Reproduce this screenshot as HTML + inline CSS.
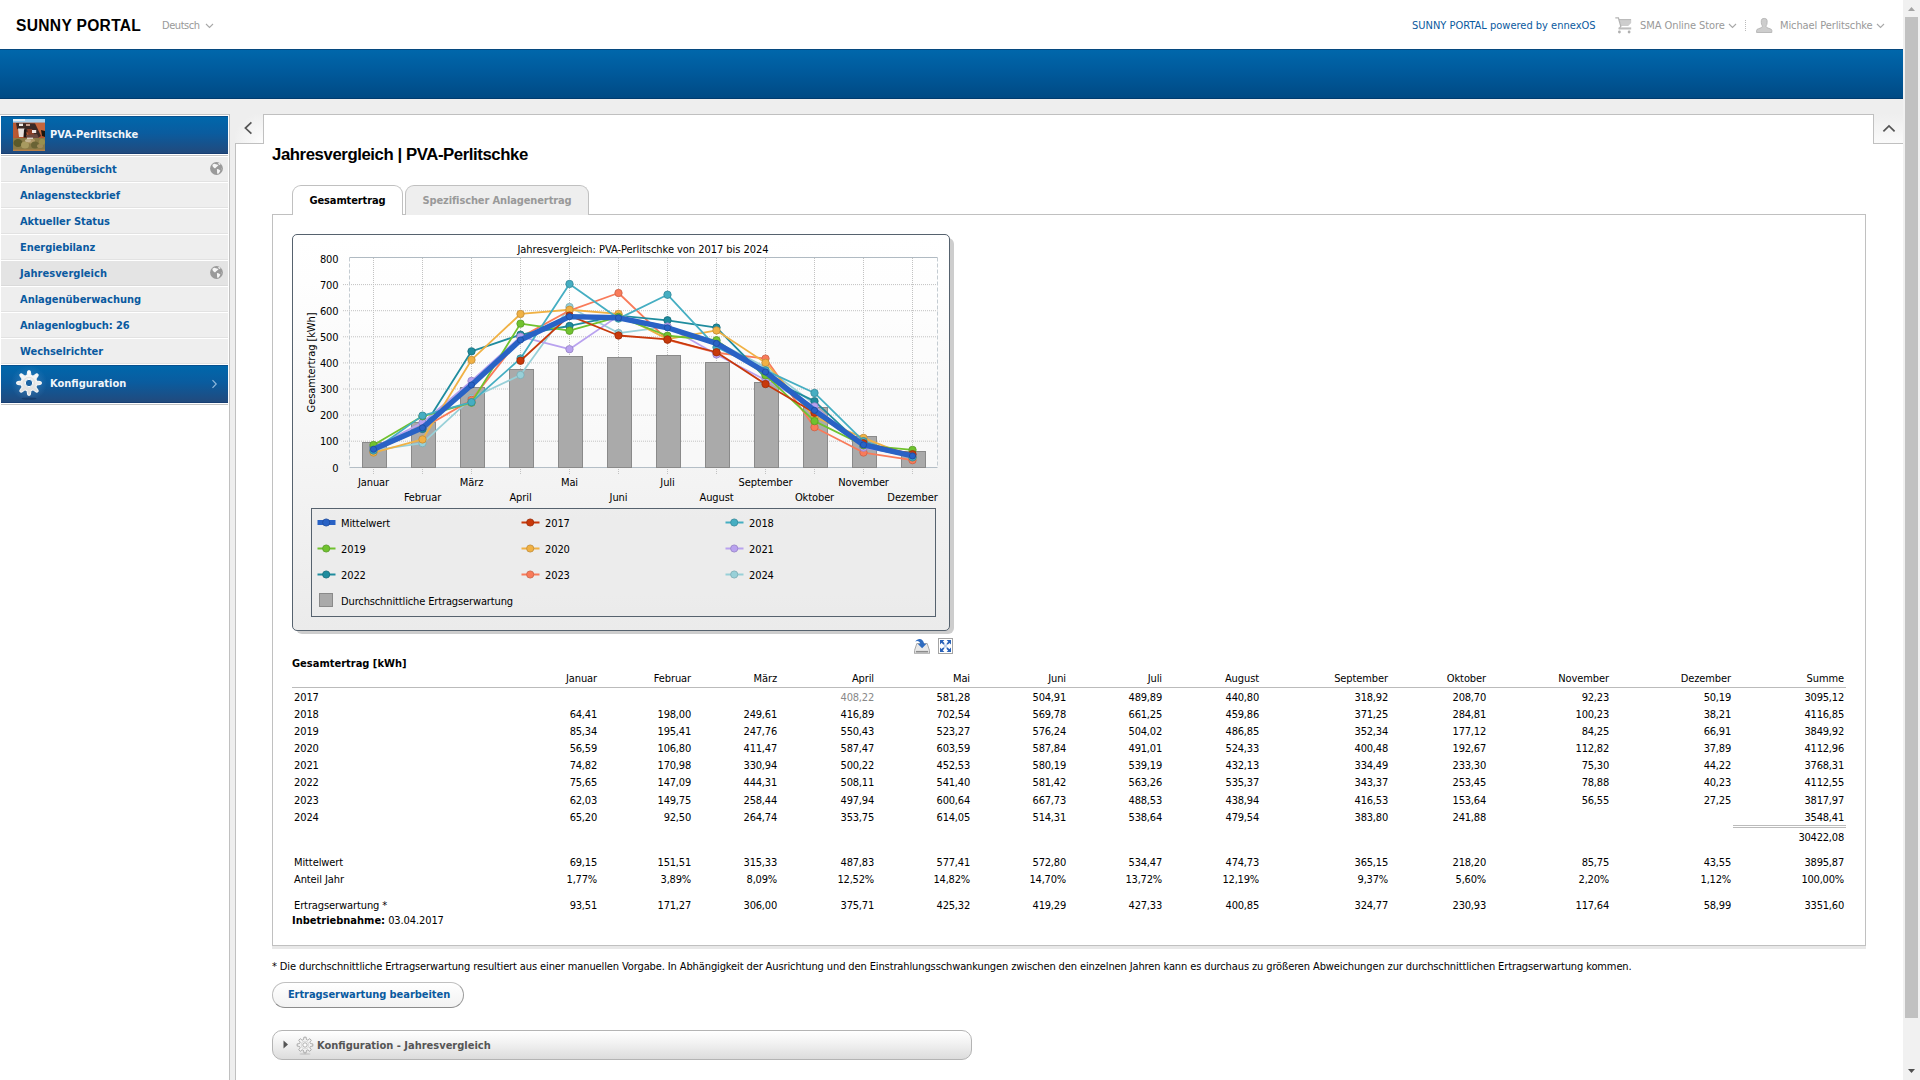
<!DOCTYPE html>
<html lang="de"><head><meta charset="utf-8"><title>Sunny Portal - Jahresvergleich</title>
<style>
*{box-sizing:border-box}
html,body{margin:0;padding:0}
body{width:1920px;height:1080px;overflow:hidden;position:relative;background:#fff;
 font-family:"DejaVu Sans Condensed","DejaVu Sans","Liberation Sans",sans-serif;font-stretch:condensed;font-size:11px;color:#000;letter-spacing:-0.1px}
.abs{position:absolute}
.nw{white-space:nowrap}
#top{left:0;top:0;width:1903px;height:49px;background:#fff}
#logo{left:16px;top:16px;font:bold 15.6px/20px "Liberation Sans",sans-serif;letter-spacing:0.3px;color:#000}
.hgrey{color:#999}
.hblue{color:#0a5aa0}
#lang{left:162px;top:19px;line-height:14px;letter-spacing:-0.45px}
#ennex{left:1412px;top:19px;line-height:14px;letter-spacing:0}
#store{left:1640px;top:19px;line-height:14px;letter-spacing:-0.07px}
#usr{left:1780px;top:19px;line-height:14px;letter-spacing:-0.1px}
#dots{left:1745px;top:20px;width:1px;height:12px;background:repeating-linear-gradient(#bbb 0 1px,transparent 1px 2px)}
#bar{left:0;top:49px;width:1903px;height:50px;background:linear-gradient(#0067ab,#005a9c 45%,#004a84);border-top:1px solid #06497f;border-bottom:1px solid #003b6e}
#pagebg{left:0;top:99px;width:1903px;height:981px;background:#eee}
#side{left:0;top:114px;width:230px;height:966px;background:#fff;border-top:1px solid #c4c4c4;border-right:1px solid #c0c0c0}
.bluehd{background:linear-gradient(#0067ab,#0a5c9f 45%,#214a7d)}
.wt{color:#f0f5fa;font-weight:bold;line-height:14px;letter-spacing:0}
.sline{left:1px;width:227px;height:1px;background:#c4c4c4}
#pvh{left:1px;top:116px;width:227px;height:38px;border-top:1px solid #07508e;border-bottom:1px solid #173e72}
.mi{left:1px;width:227px;height:25px;background:#eee;border-bottom:1px solid #e2e2e2;color:#0a5aa0;font-weight:bold;line-height:26px;padding-left:19px;letter-spacing:-0.15px}
.mi.sel{background:#e4e4e4;border-bottom-color:#dadada}
#cfg{left:1px;top:365px;width:227px;height:38px;border-top:1px solid #07508e;border-bottom:1px solid #173e72}
#content{left:235px;top:114px;width:1668px;height:966px;background:#fff;border-left:1px solid #c0c0c0;border-top:1px solid #c0c0c0}
#colbtn{left:235px;top:114px;width:29px;height:30px;background:radial-gradient(circle at 100% 100%,#fdfdfd,#eee 75%);border-right:1px solid #c0c0c0;border-bottom:1px solid #c0c0c0}
#upbtn{left:1873px;top:114px;width:30px;height:30px;background:linear-gradient(#eee,#fafafa);border-left:1px solid #c0c0c0;border-bottom:1px solid #c0c0c0}
#title{left:272px;top:145px;margin:0;font:bold 16.75px/20px "Liberation Sans",sans-serif;letter-spacing:-0.42px;color:#000}
.tab{top:185px;height:30px;border:1px solid #c0c0c0;border-bottom:none;border-radius:9px 9px 0 0;font-weight:bold;line-height:29px;text-align:center;letter-spacing:-0.12px}
#tab1{left:292px;width:111px;background:#fff;color:#000;height:30px}
#tab2{left:405px;width:184px;background:#eee;color:#999}
#panel{left:272px;top:214px;width:1594px;height:732px;border:1px solid #c0c0c0;background:#fff;box-shadow:0 3px 0 #e8e8e8}
#tcap{left:292px;top:657px;line-height:14px;font-weight:bold;letter-spacing:0}
#inb{left:292px;top:914px;line-height:14px}
#inb b{letter-spacing:0}
#tbl{border-collapse:separate;border-spacing:0;table-layout:fixed;letter-spacing:-0.2px}
#tbl td,#tbl th{padding:0 2px 1px 2px;text-align:right;font-weight:normal;vertical-align:bottom;line-height:13px;white-space:nowrap}
#tbl th{letter-spacing:-0.1px}
#tbl td.l{text-align:left;letter-spacing:-0.1px}
#tbl tr.hd th{border-bottom:1px solid #bbb;padding-bottom:2px}
#tbl td.g{color:#888}
#tbl tr.sum td:last-child{border-top:3px double #bbb}
#foot{left:272px;top:960px;line-height:14px;letter-spacing:-0.114px}
#btn{left:272px;top:982px;width:192px;height:26px;border:1px solid;border-color:#c0c0c0 #9c9c9c #8c8c8c #bcbcbc;border-radius:13px;background:linear-gradient(#fff,#f2f2f2);color:#0a5aa0;font-weight:bold;line-height:24px;text-align:center;letter-spacing:-0.05px;padding-left:2px}
#acc{left:272px;top:1030px;width:700px;height:30px;border:1px solid #b4b4b4;border-radius:10px;background:linear-gradient(#fff,#f1f1f1 45%,#dcdcdc)}
#acct{left:317px;top:1039px;line-height:14px;font-weight:bold;color:#555;letter-spacing:0}
#scroll{left:1903px;top:0;width:17px;height:1080px;background:#f1f1f1}
#thumb{left:1905px;top:17px;width:13px;height:1001px;background:#c1c1c1}
</style></head><body>
<div class="abs" id="top"></div>
<div class="abs nw" id="logo">SUNNY PORTAL</div>
<div class="abs nw hgrey" id="lang">Deutsch</div>
<svg class="abs" style="left:205px;top:23px" width="9" height="6" viewBox="0 0 9 6"><path d="M1 1L4.5 4.4L8 1" fill="none" stroke="#a8a8a8" stroke-width="1.1"/></svg>
<div class="abs nw hblue" id="ennex">SUNNY PORTAL powered by ennexOS</div>
<svg class="abs" style="left:1615px;top:17px" width="17" height="17" viewBox="0 0 17 17"><path d="M4 2.3H16.2V6L13.2 9H6z" fill="#cdcdcd"/><path d="M4 2.6H16" stroke="#b8b8b8" stroke-width="1" fill="none"/><path d="M0.3 0.9H3.4L5.8 9.3L4 12" stroke="#b4b4b4" stroke-width="1.3" fill="none"/><path d="M3.6 10.4H16.2V12.5H3.6z" fill="#bdbdbd"/><circle cx="4.4" cy="15" r="1.4" fill="#b0b0b0"/><circle cx="14.1" cy="15" r="1.4" fill="#b0b0b0"/></svg>
<div class="abs nw hgrey" id="store">SMA Online Store</div>
<svg class="abs" style="left:1728px;top:23px" width="9" height="6" viewBox="0 0 9 6"><path d="M1 1L4.5 4.4L8 1" fill="none" stroke="#a8a8a8" stroke-width="1.1"/></svg>
<div class="abs" id="dots"></div>
<svg class="abs" style="left:1756px;top:17px" width="17" height="17" viewBox="0 0 17 17"><path d="M0.6 15.5V13.4Q0.6 12.2 2.4 11.8L5.6 10.6Q6.6 10 6.3 8.8Q5.3 7.6 5.3 5.6V3.6Q5.3 1.4 8.2 1.4Q11.1 1.4 11.1 3.6V5.6Q11.1 7.6 10.1 8.8Q9.8 10 10.8 10.6L14 11.8Q15.8 12.2 15.8 13.4V15.5z" fill="#cdcdcd" stroke="#b4b4b4" stroke-width="0.9"/></svg>
<div class="abs nw hgrey" id="usr">Michael Perlitschke</div>
<svg class="abs" style="left:1876px;top:23px" width="9" height="6" viewBox="0 0 9 6"><path d="M1 1L4.5 4.4L8 1" fill="none" stroke="#a8a8a8" stroke-width="1.1"/></svg>
<div class="abs" id="bar"></div>
<div class="abs" id="pagebg"></div>
<div class="abs" id="side"></div>
<div class="abs bluehd" id="pvh"></div><div class="abs sline" style="top:155px"></div>
<svg class="abs" style="left:13px;top:119px" width="32" height="32" viewBox="0 0 32 32"><defs><filter id="tb" x="-5%" y="-5%" width="110%" height="110%"><feGaussianBlur stdDeviation="0.7"/></filter><clipPath id="tc"><rect width="32" height="32"/></clipPath></defs><g clip-path="url(#tc)"><g filter="url(#tb)"><rect x="-2" y="-2" width="36" height="36" fill="#b5552f"/><rect x="-2" y="-2" width="36" height="5.6" fill="#a9d2ee"/><rect x="-2" y="-2" width="14" height="4" fill="#e4eef6"/><path d="M22 4L34 4L34 20L28 16z" fill="#c4663c"/><path d="M3 4L22 4.5L28 17L25 19L12 12L4 10z" fill="#3a2a26"/><path d="M0 5L3 4L4 18L0 19z" fill="#b85a36"/><rect x="6" y="4.6" width="4" height="2.4" fill="#f0ece8"/><rect x="13" y="5" width="4" height="2" fill="#c8a090"/><path d="M5 9.6L11.5 9.6L10.5 18L6 18z" fill="#e6e0dc"/><path d="M11 10.5L13 10.5L14 18.5L10.6 18.5z" fill="#1c1412"/><path d="M14 10L19 10L22 17L16 18z" fill="#8a3e28"/><rect x="19" y="11" width="4.2" height="3" fill="#efe6e2"/><path d="M13 16L24 15L26 19L14 20z" fill="#6a4a40"/><path d="M28 11L32 12L32 18L29 17z" fill="#1e1410"/><rect x="-2" y="19" width="36" height="12" fill="#8a7a46"/><ellipse cx="5" cy="24" rx="4.5" ry="4" fill="#5c5a2a"/><ellipse cx="12" cy="26" rx="4" ry="3.5" fill="#a89a60"/><ellipse cx="18" cy="22" rx="4" ry="2.5" fill="#b09868"/><ellipse cx="22" cy="26" rx="4" ry="3.5" fill="#6a6434"/><ellipse cx="27" cy="27" rx="3" ry="2" fill="#a08a58"/><ellipse cx="15" cy="21.5" rx="3" ry="1.6" fill="#c4b490"/><ellipse cx="29" cy="23" rx="3" ry="3" fill="#9a9050"/><rect x="14" y="18.6" width="6" height="1.4" fill="#d8d0c4"/><rect x="-2" y="30.6" width="36" height="4" fill="#b88048"/></g></g></svg>
<div class="abs nw wt" style="left:50px;top:128px">PVA-Perlitschke</div>
<div class="abs nw mi" style="top:157px;letter-spacing:-0.1px">Anlagenübersicht</div>
<div class="abs nw mi" style="top:183px;letter-spacing:-0.11px">Anlagensteckbrief</div>
<div class="abs nw mi" style="top:209px;letter-spacing:-0.06px">Aktueller Status</div>
<div class="abs nw mi" style="top:235px;letter-spacing:-0.06px">Energiebilanz</div>
<div class="abs nw mi sel" style="top:261px;letter-spacing:0.04px">Jahresvergleich</div>
<div class="abs nw mi" style="top:287px;letter-spacing:-0.01px">Anlagenüberwachung</div>
<div class="abs nw mi" style="top:313px;letter-spacing:-0.08px">Anlagenlogbuch: 26</div>
<div class="abs nw mi" style="top:339px;letter-spacing:-0.04px">Wechselrichter</div>
<svg class="abs" style="left:210px;top:162px" width="13" height="13" viewBox="0 0 13 13"><circle cx="6.5" cy="6.5" r="6.4" fill="#9a9a9a"/><path d="M2.4 2.8L4.2 1.7L6 2.2L8.6 3.1L7.4 4.2L6 5.4L5 6.4L3.6 5.6L2.6 4.2z" fill="#f6f6f6"/><path d="M8.2 1.0L9.4 1.0L10.5 2.4L9.6 3L8.6 2.2z" fill="#f6f6f6"/><path d="M6.9 7.1L8.4 7.3L10.4 8.6L9.4 10.4L8 12L7.2 11.4L7 9z" fill="#f6f6f6"/><path d="M11.4 6.1L12.1 6.4L12 7.6L11.4 7.4z" fill="#c4c4c4"/></svg>
<svg class="abs" style="left:210px;top:266px" width="13" height="13" viewBox="0 0 13 13"><circle cx="6.5" cy="6.5" r="6.4" fill="#9a9a9a"/><path d="M2.4 2.8L4.2 1.7L6 2.2L8.6 3.1L7.4 4.2L6 5.4L5 6.4L3.6 5.6L2.6 4.2z" fill="#f6f6f6"/><path d="M8.2 1.0L9.4 1.0L10.5 2.4L9.6 3L8.6 2.2z" fill="#f6f6f6"/><path d="M6.9 7.1L8.4 7.3L10.4 8.6L9.4 10.4L8 12L7.2 11.4L7 9z" fill="#f6f6f6"/><path d="M11.4 6.1L12.1 6.4L12 7.6L11.4 7.4z" fill="#c4c4c4"/></svg>
<div class="abs bluehd" id="cfg"></div><div class="abs sline" style="top:404px"></div>
<svg class="abs" style="left:9px;top:364px" width="40" height="38" viewBox="-20 -19 40 38"><defs><radialGradient id="gg" cx="0" cy="0" r="18" gradientUnits="userSpaceOnUse"><stop offset="0" stop-color="#5f9ad0" stop-opacity=".55"/><stop offset="1" stop-color="#5f9ad0" stop-opacity="0"/></radialGradient><linearGradient id="gf" x1="0" y1="0" x2="0" y2="1"><stop offset="0" stop-color="#fff"/><stop offset="1" stop-color="#d8d8d8"/></linearGradient></defs><circle r="18" fill="url(#gg)"/><ellipse cx="0" cy="15.6" rx="7.5" ry="1.1" fill="#0d2f5c" opacity=".55"/><path d="M-1.94 -7.76L-1.38 -11.22L-0.75 -12.28L0.75 -12.28L1.38 -11.22L1.94 -7.76L4.12 -6.86L6.96 -8.90L8.15 -9.21L9.21 -8.15L8.90 -6.96L6.86 -4.12L7.76 -1.94L11.22 -1.38L12.28 -0.75L12.28 0.75L11.22 1.38L7.76 1.94L6.86 4.12L8.90 6.96L9.21 8.15L8.15 9.21L6.96 8.90L4.12 6.86L1.94 7.76L1.38 11.22L0.75 12.28L-0.75 12.28L-1.38 11.22L-1.94 7.76L-4.12 6.86L-6.96 8.90L-8.15 9.21L-9.21 8.15L-8.90 6.96L-6.86 4.12L-7.76 1.94L-11.22 1.38L-12.28 0.75L-12.28 -0.75L-11.22 -1.38L-7.76 -1.94L-6.86 -4.12L-8.90 -6.96L-9.21 -8.15L-8.15 -9.21L-6.96 -8.90L-4.12 -6.86Z" fill="url(#gf)" stroke="#f6f6f6" stroke-width="1.1" stroke-linejoin="round"/><circle r="5.6" fill="none" stroke="#e2e2e2" stroke-width="1.2"/><circle r="3.7" fill="#1b62a2" stroke="#fff" stroke-width="1"/></svg>
<div class="abs nw wt" style="left:50px;top:377px">Konfiguration</div>
<svg class="abs" style="left:211px;top:379px" width="7" height="10" viewBox="0 0 7 10"><path d="M1.5 1.2L5.2 5L1.5 8.8" fill="none" stroke="#8fb8dc" stroke-width="1.2"/></svg>
<div class="abs" id="content"></div>
<div class="abs" id="colbtn"></div>
<svg class="abs" style="left:243px;top:121px" width="11" height="14" viewBox="0 0 11 14"><path d="M8.4 1.4L2.4 7.1L8.4 12.6" fill="none" stroke="#555" stroke-width="1.7"/></svg>
<div class="abs" id="upbtn"></div>
<svg class="abs" style="left:1882px;top:124px" width="14" height="9" viewBox="0 0 14 9"><path d="M1.4 7.4L7 2L12.6 7.4" fill="none" stroke="#555" stroke-width="1.7"/></svg>
<h1 class="abs nw" id="title">Jahresvergleich | PVA-Perlitschke</h1>
<div class="abs" id="panel"></div>
<div class="abs nw tab" id="tab2">Spezifischer Anlagenertrag</div>
<div class="abs nw tab" id="tab1">Gesamtertrag</div>
<svg class="abs" id="chart" style="left:288px;top:230px" width="670" height="410" viewBox="0 0 670 410" font-family='"DejaVu Sans Condensed","DejaVu Sans","Liberation Sans",sans-serif' font-size="11" letter-spacing="-0.1">
<defs><linearGradient id="pg" x1="0" y1="0" x2="0" y2="1"><stop offset="0" stop-color="#fff"/><stop offset="0.12" stop-color="#fefefe"/><stop offset="1" stop-color="#ebebeb"/></linearGradient></defs>
<rect x="8" y="8" width="658" height="396" rx="6" fill="#cdcdcd"/>
<rect x="4.5" y="4.5" width="657" height="396" rx="4.5" fill="url(#pg)" stroke="#56626e"/>
<rect x="61.5" y="27.5" width="588.0" height="210.0" fill="#fff" fill-opacity="0.35"/>
<path d="M55 211.2H649.5M55 185.1H649.5M55 159H649.5M55 132.9H649.5M55 106.8H649.5M55 80.7H649.5M55 54.6H649.5" stroke="#c2c2c2" stroke-dasharray="1 1" fill="none"/>
<path d="M85.5 28.0V237.0M85.5 239.0V245.0M134.5 28.0V237.0M134.5 239.0V245.0M183.5 28.0V237.0M183.5 239.0V245.0M232.5 28.0V237.0M232.5 239.0V245.0M281.5 28.0V237.0M281.5 239.0V245.0M330.5 28.0V237.0M330.5 239.0V245.0M379.5 28.0V237.0M379.5 239.0V245.0M428.5 28.0V237.0M428.5 239.0V245.0M477.5 28.0V237.0M477.5 239.0V245.0M526.5 28.0V237.0M526.5 239.0V245.0M575.5 28.0V237.0M575.5 239.0V245.0M624.5 28.0V237.0M624.5 239.0V245.0" stroke="#c2c2c2" stroke-dasharray="1 1" fill="none"/>
<path d="M61.5 27.5H649.5" stroke="#b0bac2" fill="none"/>
<path d="M61.5 237.5H649.5" stroke="#b4bec6" fill="none"/>
<path d="M61.5 27.5V237.5M649.5 27.5V237.5" stroke="#c4ccd2" stroke-dasharray="4 2" fill="none"/>
<rect x="74.5" y="212.5" width="24" height="25" fill="#aaa" stroke="#8a8a8a"/>
<rect x="123.5" y="192.5" width="24" height="45" fill="#aaa" stroke="#8a8a8a"/>
<rect x="172.5" y="157.5" width="24" height="80" fill="#aaa" stroke="#8a8a8a"/>
<rect x="221.5" y="139.5" width="24" height="98" fill="#aaa" stroke="#8a8a8a"/>
<rect x="270.5" y="126.5" width="24" height="111" fill="#aaa" stroke="#8a8a8a"/>
<rect x="319.5" y="127.5" width="24" height="110" fill="#aaa" stroke="#8a8a8a"/>
<rect x="368.5" y="125.5" width="24" height="112" fill="#aaa" stroke="#8a8a8a"/>
<rect x="417.5" y="132.5" width="24" height="105" fill="#aaa" stroke="#8a8a8a"/>
<rect x="466.5" y="152.5" width="24" height="85" fill="#aaa" stroke="#8a8a8a"/>
<rect x="515.5" y="177.5" width="24" height="60" fill="#aaa" stroke="#8a8a8a"/>
<rect x="564.5" y="206.5" width="24" height="31" fill="#aaa" stroke="#8a8a8a"/>
<rect x="613.5" y="221.5" width="24" height="16" fill="#aaa" stroke="#8a8a8a"/>
<g fill="#98d0d8" stroke="#7aabb2" stroke-width="0.8"><path d="M85.5 220.28L134.5 213.16L183.5 168.2L232.5 144.97L281.5 77.03L330.5 103.07L379.5 96.71L428.5 112.14L477.5 137.13L526.5 174.17" fill="none" stroke="#98d0d8" stroke-width="1.8" stroke-linejoin="round"/>
<circle cx="85.5" cy="220.28" r="3.7"/><circle cx="134.5" cy="213.16" r="3.7"/><circle cx="183.5" cy="168.2" r="3.7"/><circle cx="232.5" cy="144.97" r="3.7"/><circle cx="281.5" cy="77.03" r="3.7"/><circle cx="330.5" cy="103.07" r="3.7"/><circle cx="379.5" cy="96.71" r="3.7"/><circle cx="428.5" cy="112.14" r="3.7"/><circle cx="477.5" cy="137.13" r="3.7"/><circle cx="526.5" cy="174.17" r="3.7"/></g>
<g fill="#f97b5a" stroke="#c96248" stroke-width="0.8"><path d="M85.5 221.11L134.5 198.22L183.5 169.85L232.5 107.34L281.5 80.53L330.5 63.02L379.5 109.79L428.5 122.74L477.5 128.59L526.5 197.2L575.5 222.54L624.5 230.19" fill="none" stroke="#f97b5a" stroke-width="1.8" stroke-linejoin="round"/>
<circle cx="85.5" cy="221.11" r="3.7"/><circle cx="134.5" cy="198.22" r="3.7"/><circle cx="183.5" cy="169.85" r="3.7"/><circle cx="232.5" cy="107.34" r="3.7"/><circle cx="281.5" cy="80.53" r="3.7"/><circle cx="330.5" cy="63.02" r="3.7"/><circle cx="379.5" cy="109.79" r="3.7"/><circle cx="428.5" cy="122.74" r="3.7"/><circle cx="477.5" cy="128.59" r="3.7"/><circle cx="526.5" cy="197.2" r="3.7"/><circle cx="575.5" cy="222.54" r="3.7"/><circle cx="624.5" cy="230.19" r="3.7"/></g>
<g fill="#1f8c9e" stroke="#176c7a" stroke-width="0.8"><path d="M85.5 217.56L134.5 198.91L183.5 121.34L232.5 104.68L281.5 95.99L330.5 85.55L379.5 90.29L428.5 97.57L477.5 147.68L526.5 171.15L575.5 216.71L624.5 226.8" fill="none" stroke="#1f8c9e" stroke-width="1.8" stroke-linejoin="round"/>
<circle cx="85.5" cy="217.56" r="3.7"/><circle cx="134.5" cy="198.91" r="3.7"/><circle cx="183.5" cy="121.34" r="3.7"/><circle cx="232.5" cy="104.68" r="3.7"/><circle cx="281.5" cy="95.99" r="3.7"/><circle cx="330.5" cy="85.55" r="3.7"/><circle cx="379.5" cy="90.29" r="3.7"/><circle cx="428.5" cy="97.57" r="3.7"/><circle cx="477.5" cy="147.68" r="3.7"/><circle cx="526.5" cy="171.15" r="3.7"/><circle cx="575.5" cy="216.71" r="3.7"/><circle cx="624.5" cy="226.8" r="3.7"/></g>
<g fill="#b9a2ef" stroke="#9683c4" stroke-width="0.8"><path d="M85.5 217.77L134.5 192.67L183.5 150.92L232.5 106.74L281.5 119.19L330.5 85.87L379.5 96.57L428.5 124.51L477.5 150L526.5 176.41L575.5 217.65L624.5 225.76" fill="none" stroke="#b9a2ef" stroke-width="1.8" stroke-linejoin="round"/>
<circle cx="85.5" cy="217.77" r="3.7"/><circle cx="134.5" cy="192.67" r="3.7"/><circle cx="183.5" cy="150.92" r="3.7"/><circle cx="232.5" cy="106.74" r="3.7"/><circle cx="281.5" cy="119.19" r="3.7"/><circle cx="330.5" cy="85.87" r="3.7"/><circle cx="379.5" cy="96.57" r="3.7"/><circle cx="428.5" cy="124.51" r="3.7"/><circle cx="477.5" cy="150" r="3.7"/><circle cx="526.5" cy="176.41" r="3.7"/><circle cx="575.5" cy="217.65" r="3.7"/><circle cx="624.5" cy="225.76" r="3.7"/></g>
<g fill="#f0b144" stroke="#c08c38" stroke-width="0.8"><path d="M85.5 222.53L134.5 209.43L183.5 129.91L232.5 83.97L281.5 79.76L330.5 83.87L379.5 109.15L428.5 100.45L477.5 132.77L526.5 187.01L575.5 207.85L624.5 227.41" fill="none" stroke="#f0b144" stroke-width="1.8" stroke-linejoin="round"/>
<circle cx="85.5" cy="222.53" r="3.7"/><circle cx="134.5" cy="209.43" r="3.7"/><circle cx="183.5" cy="129.91" r="3.7"/><circle cx="232.5" cy="83.97" r="3.7"/><circle cx="281.5" cy="79.76" r="3.7"/><circle cx="330.5" cy="83.87" r="3.7"/><circle cx="379.5" cy="109.15" r="3.7"/><circle cx="428.5" cy="100.45" r="3.7"/><circle cx="477.5" cy="132.77" r="3.7"/><circle cx="526.5" cy="187.01" r="3.7"/><circle cx="575.5" cy="207.85" r="3.7"/><circle cx="624.5" cy="227.41" r="3.7"/></g>
<g fill="#70c22e" stroke="#58992a" stroke-width="0.8"><path d="M85.5 215.03L134.5 186.3L183.5 172.63L232.5 93.64L281.5 100.73L330.5 86.9L379.5 105.75L428.5 110.23L477.5 145.34L526.5 191.07L575.5 215.31L624.5 219.84" fill="none" stroke="#70c22e" stroke-width="1.8" stroke-linejoin="round"/>
<circle cx="85.5" cy="215.03" r="3.7"/><circle cx="134.5" cy="186.3" r="3.7"/><circle cx="183.5" cy="172.63" r="3.7"/><circle cx="232.5" cy="93.64" r="3.7"/><circle cx="281.5" cy="100.73" r="3.7"/><circle cx="330.5" cy="86.9" r="3.7"/><circle cx="379.5" cy="105.75" r="3.7"/><circle cx="428.5" cy="110.23" r="3.7"/><circle cx="477.5" cy="145.34" r="3.7"/><circle cx="526.5" cy="191.07" r="3.7"/><circle cx="575.5" cy="215.31" r="3.7"/><circle cx="624.5" cy="219.84" r="3.7"/></g>
<g fill="#45aec2" stroke="#35899a" stroke-width="0.8"><path d="M85.5 220.49L134.5 185.62L183.5 172.15L232.5 128.49L281.5 53.94L330.5 88.59L379.5 64.71L428.5 117.28L477.5 140.4L526.5 162.96L575.5 211.14L624.5 227.33" fill="none" stroke="#45aec2" stroke-width="1.8" stroke-linejoin="round"/>
<circle cx="85.5" cy="220.49" r="3.7"/><circle cx="134.5" cy="185.62" r="3.7"/><circle cx="183.5" cy="172.15" r="3.7"/><circle cx="232.5" cy="128.49" r="3.7"/><circle cx="281.5" cy="53.94" r="3.7"/><circle cx="330.5" cy="88.59" r="3.7"/><circle cx="379.5" cy="64.71" r="3.7"/><circle cx="428.5" cy="117.28" r="3.7"/><circle cx="477.5" cy="140.4" r="3.7"/><circle cx="526.5" cy="162.96" r="3.7"/><circle cx="575.5" cy="211.14" r="3.7"/><circle cx="624.5" cy="227.33" r="3.7"/></g>
<g fill="#c8390b" stroke="#9a2c08" stroke-width="0.8"><path d="M232.5 130.75L281.5 85.59L330.5 105.52L379.5 109.44L428.5 122.25L477.5 154.06L526.5 182.83L575.5 213.23L624.5 224.2" fill="none" stroke="#c8390b" stroke-width="1.8" stroke-linejoin="round"/>
<circle cx="232.5" cy="130.75" r="3.7"/><circle cx="281.5" cy="85.59" r="3.7"/><circle cx="330.5" cy="105.52" r="3.7"/><circle cx="379.5" cy="109.44" r="3.7"/><circle cx="428.5" cy="122.25" r="3.7"/><circle cx="477.5" cy="154.06" r="3.7"/><circle cx="526.5" cy="182.83" r="3.7"/><circle cx="575.5" cy="213.23" r="3.7"/><circle cx="624.5" cy="224.2" r="3.7"/></g>
<g fill="#2962c5" stroke="#1d4a9a" stroke-width="0.8"><path d="M85.5 219.25L134.5 197.76L183.5 155L232.5 109.98L281.5 86.6L330.5 87.8L379.5 97.8L428.5 113.4L477.5 142L526.5 180.35L575.5 214.92L624.5 225.93" fill="none" stroke="#2962c5" stroke-width="5.4" stroke-linejoin="round"/>
<circle cx="85.5" cy="219.25" r="3.1"/><circle cx="134.5" cy="197.76" r="3.1"/><circle cx="183.5" cy="155" r="3.1"/><circle cx="232.5" cy="109.98" r="3.1"/><circle cx="281.5" cy="86.6" r="3.1"/><circle cx="330.5" cy="87.8" r="3.1"/><circle cx="379.5" cy="97.8" r="3.1"/><circle cx="428.5" cy="113.4" r="3.1"/><circle cx="477.5" cy="142" r="3.1"/><circle cx="526.5" cy="180.35" r="3.1"/><circle cx="575.5" cy="214.92" r="3.1"/><circle cx="624.5" cy="225.93" r="3.1"/></g>
<text x="355" y="23" text-anchor="middle" letter-spacing="-0.04">Jahresvergleich: PVA-Perlitschke von 2017 bis 2024</text>
<text x="50.5" y="241.5" text-anchor="end">0</text>
<text x="50.5" y="215.4" text-anchor="end">100</text>
<text x="50.5" y="189.3" text-anchor="end">200</text>
<text x="50.5" y="163.2" text-anchor="end">300</text>
<text x="50.5" y="137.1" text-anchor="end">400</text>
<text x="50.5" y="111" text-anchor="end">500</text>
<text x="50.5" y="84.9" text-anchor="end">600</text>
<text x="50.5" y="58.8" text-anchor="end">700</text>
<text x="50.5" y="32.7" text-anchor="end">800</text>
<text x="85.5" y="256" text-anchor="middle">Januar</text>
<text x="134.5" y="271" text-anchor="middle">Februar</text>
<text x="183.5" y="256" text-anchor="middle">März</text>
<text x="232.5" y="271" text-anchor="middle">April</text>
<text x="281.5" y="256" text-anchor="middle">Mai</text>
<text x="330.5" y="271" text-anchor="middle">Juni</text>
<text x="379.5" y="256" text-anchor="middle">Juli</text>
<text x="428.5" y="271" text-anchor="middle">August</text>
<text x="477.5" y="256" text-anchor="middle">September</text>
<text x="526.5" y="271" text-anchor="middle">Oktober</text>
<text x="575.5" y="256" text-anchor="middle">November</text>
<text x="624.5" y="271" text-anchor="middle">Dezember</text>
<text transform="translate(27 132.5) rotate(-90)" text-anchor="middle">Gesamtertrag [kWh]</text>
<rect x="23.5" y="278.5" width="624" height="108" fill="#ebebeb" fill-opacity="0.8" stroke="#56626e"/>
<path d="M29.5 292.5h18" stroke="#2962c5" stroke-width="5"/><circle cx="38.2" cy="292.5" r="3.6" fill="#2962c5" stroke="#1d4a9a" stroke-width="0.8"/>
<text x="53" y="296.8">Mittelwert</text>
<path d="M233.5 292.5h18" stroke="#c8390b" stroke-width="2"/><circle cx="242.2" cy="292.5" r="3.6" fill="#c8390b" stroke="#9a2c08" stroke-width="0.8"/>
<text x="257" y="296.8">2017</text>
<path d="M437.5 292.5h18" stroke="#45aec2" stroke-width="2"/><circle cx="446.2" cy="292.5" r="3.6" fill="#45aec2" stroke="#35899a" stroke-width="0.8"/>
<text x="461" y="296.8">2018</text>
<path d="M29.5 318.5h18" stroke="#70c22e" stroke-width="2"/><circle cx="38.2" cy="318.5" r="3.6" fill="#70c22e" stroke="#58992a" stroke-width="0.8"/>
<text x="53" y="322.8">2019</text>
<path d="M233.5 318.5h18" stroke="#f0b144" stroke-width="2"/><circle cx="242.2" cy="318.5" r="3.6" fill="#f0b144" stroke="#c08c38" stroke-width="0.8"/>
<text x="257" y="322.8">2020</text>
<path d="M437.5 318.5h18" stroke="#b9a2ef" stroke-width="2"/><circle cx="446.2" cy="318.5" r="3.6" fill="#b9a2ef" stroke="#9683c4" stroke-width="0.8"/>
<text x="461" y="322.8">2021</text>
<path d="M29.5 344.5h18" stroke="#1f8c9e" stroke-width="2"/><circle cx="38.2" cy="344.5" r="3.6" fill="#1f8c9e" stroke="#176c7a" stroke-width="0.8"/>
<text x="53" y="348.8">2022</text>
<path d="M233.5 344.5h18" stroke="#f97b5a" stroke-width="2"/><circle cx="242.2" cy="344.5" r="3.6" fill="#f97b5a" stroke="#c96248" stroke-width="0.8"/>
<text x="257" y="348.8">2023</text>
<path d="M437.5 344.5h18" stroke="#98d0d8" stroke-width="2"/><circle cx="446.2" cy="344.5" r="3.6" fill="#98d0d8" stroke="#7aabb2" stroke-width="0.8"/>
<text x="461" y="348.8">2024</text>
<rect x="31.5" y="363.5" width="13" height="13" fill="#aaa" stroke="#8a8a8a"/>
<text x="53" y="375" letter-spacing="-0.13">Durchschnittliche Ertragserwartung</text>
</svg>
<svg class="abs" style="left:914px;top:638px" width="16" height="17" viewBox="0 0 16 17"><path d="M2.8 5.5h10.4l2.3 7v3h-15v-3z" fill="#e8e8e8" stroke="#a8a8a8"/><path d="M1 12.6h14v2.8h-14z" fill="#dcdcdc"/><path d="M2 13.7h12" stroke="#8c8c8c" stroke-width="1.5"/><path d="M1.2 3.6c2.6-4 8-3.6 9 2.2h2.3l-4.4 4.4-4.4-4.4h2.6c-.6-2.4-2.8-3.4-5.1-2.2z" fill="#2f6cc0"/></svg>
<svg class="abs" style="left:938px;top:638px" width="16" height="16" viewBox="0 0 16 16"><rect x=".5" y=".5" width="14" height="15" fill="#fff" stroke="#a4a4a4"/><path d="M3 3L12 13M12 3L3 13" stroke="#b8cce8" stroke-width="1.4"/><path d="M2 2h4.4l-1.5 1.5 1.7 1.7-1.2 1.2-1.7-1.7-1.7 1.7zM13 2v4.4l-1.5-1.5-1.7 1.7-1.2-1.2 1.7-1.7-1.7-1.7zM2 14v-4.4l1.5 1.5 1.7-1.7 1.2 1.2-1.7 1.7 1.7 1.7zM13 14h-4.4l1.5-1.5-1.7-1.7 1.2-1.2 1.7 1.7 1.7-1.7z" fill="#2a62b8"/></svg>
<div class="abs nw" id="tcap">Gesamtertrag [kWh]</div>
<table class="abs" id="tbl" style="left:292px;top:669px;width:1554px"><colgroup><col style="width:213px"><col style="width:94px"><col style="width:94px"><col style="width:86px"><col style="width:97px"><col style="width:96px"><col style="width:96px"><col style="width:96px"><col style="width:97px"><col style="width:129px"><col style="width:98px"><col style="width:123px"><col style="width:122px"><col style="width:113px"></colgroup>
<tr class="hd" style="height:19px"><th></th><th>Januar</th><th>Februar</th><th>März</th><th>April</th><th>Mai</th><th>Juni</th><th>Juli</th><th>August</th><th>September</th><th>Oktober</th><th>November</th><th>Dezember</th><th>Summe</th></tr>
<tr style="height:17px"><td class="l">2017</td><td></td><td></td><td></td><td class=g>408,22</td><td>581,28</td><td>504,91</td><td>489,89</td><td>440,80</td><td>318,92</td><td>208,70</td><td>92,23</td><td>50,19</td><td>3095,12</td></tr>
<tr style="height:17px"><td class="l">2018</td><td>64,41</td><td>198,00</td><td>249,61</td><td>416,89</td><td>702,54</td><td>569,78</td><td>661,25</td><td>459,86</td><td>371,25</td><td>284,81</td><td>100,23</td><td>38,21</td><td>4116,85</td></tr>
<tr style="height:17px"><td class="l">2019</td><td>85,34</td><td>195,41</td><td>247,76</td><td>550,43</td><td>523,27</td><td>576,24</td><td>504,02</td><td>486,85</td><td>352,34</td><td>177,12</td><td>84,25</td><td>66,91</td><td>3849,92</td></tr>
<tr style="height:17px"><td class="l">2020</td><td>56,59</td><td>106,80</td><td>411,47</td><td>587,47</td><td>603,59</td><td>587,84</td><td>491,01</td><td>524,33</td><td>400,48</td><td>192,67</td><td>112,82</td><td>37,89</td><td>4112,96</td></tr>
<tr style="height:17px"><td class="l">2021</td><td>74,82</td><td>170,98</td><td>330,94</td><td>500,22</td><td>452,53</td><td>580,19</td><td>539,19</td><td>432,13</td><td>334,49</td><td>233,30</td><td>75,30</td><td>44,22</td><td>3768,31</td></tr>
<tr style="height:17px"><td class="l">2022</td><td>75,65</td><td>147,09</td><td>444,31</td><td>508,11</td><td>541,40</td><td>581,42</td><td>563,26</td><td>535,37</td><td>343,37</td><td>253,45</td><td>78,88</td><td>40,23</td><td>4112,55</td></tr>
<tr style="height:18px"><td class="l">2023</td><td>62,03</td><td>149,75</td><td>258,44</td><td>497,94</td><td>600,64</td><td>667,73</td><td>488,53</td><td>438,94</td><td>416,53</td><td>153,64</td><td>56,55</td><td>27,25</td><td>3817,97</td></tr>
<tr style="height:17px"><td class="l">2024</td><td>65,20</td><td>92,50</td><td>264,74</td><td>353,75</td><td>614,05</td><td>514,31</td><td>538,64</td><td>479,54</td><td>383,80</td><td>241,88</td><td></td><td></td><td>3548,41</td></tr>
<tr class="sum" style="height:20px"><td class="l"></td><td></td><td></td><td></td><td></td><td></td><td></td><td></td><td></td><td></td><td></td><td></td><td></td><td>30422,08</td></tr>
<tr style="height:25px"><td class="l">Mittelwert</td><td>69,15</td><td>151,51</td><td>315,33</td><td>487,83</td><td>577,41</td><td>572,80</td><td>534,47</td><td>474,73</td><td>365,15</td><td>218,20</td><td>85,75</td><td>43,55</td><td>3895,87</td></tr>
<tr style="height:17px"><td class="l">Anteil Jahr</td><td>1,77%</td><td>3,89%</td><td>8,09%</td><td>12,52%</td><td>14,82%</td><td>14,70%</td><td>13,72%</td><td>12,19%</td><td>9,37%</td><td>5,60%</td><td>2,20%</td><td>1,12%</td><td>100,00%</td></tr>
<tr style="height:26px"><td class="l">Ertragserwartung *</td><td>93,51</td><td>171,27</td><td>306,00</td><td>375,71</td><td>425,32</td><td>419,29</td><td>427,33</td><td>400,85</td><td>324,77</td><td>230,93</td><td>117,64</td><td>58,99</td><td>3351,60</td></tr>
</table>
<div class="abs nw" id="inb"><b>Inbetriebnahme:</b> 03.04.2017</div>
<div class="abs nw" id="foot">* Die durchschnittliche Ertragserwartung resultiert aus einer manuellen Vorgabe. In Abhängigkeit der Ausrichtung und den Einstrahlungsschwankungen zwischen den einzelnen Jahren kann es durchaus zu größeren Abweichungen zur durchschnittlichen Ertragserwartung kommen.</div>
<div class="abs nw" id="btn">Ertragserwartung bearbeiten</div>
<div class="abs" id="acc"></div>
<svg class="abs" style="left:283px;top:1040px" width="6" height="9" viewBox="0 0 6 9"><path d="M0.5 0.5L5 4.5L0.5 8.5z" fill="#555"/></svg>
<svg class="abs" style="left:294.5px;top:1034.5px" width="20" height="21" viewBox="-10 -10 20 21"><ellipse cx="0" cy="9" rx="5.5" ry="0.9" fill="#bbb" opacity=".6"/><path d="M-1.35 -5.43L-1.10 -7.82L1.10 -7.82L1.35 -5.43L2.88 -4.80L4.75 -6.31L6.31 -4.75L4.80 -2.88L5.43 -1.35L7.82 -1.10L7.82 1.10L5.43 1.35L4.80 2.88L6.31 4.75L4.75 6.31L2.88 4.80L1.35 5.43L1.10 7.82L-1.10 7.82L-1.35 5.43L-2.88 4.80L-4.75 6.31L-6.31 4.75L-4.80 2.88L-5.43 1.35L-7.82 1.10L-7.82 -1.10L-5.43 -1.35L-4.80 -2.88L-6.31 -4.75L-4.75 -6.31L-2.88 -4.80Z" fill="#f7f7f7" stroke="#a2a2a2" stroke-width="0.9" stroke-linejoin="round"/><circle r="3.9" fill="none" stroke="#cfcfcf" stroke-width="0.8"/><circle r="2.2" fill="#fdfdfd" stroke="#a6a6a6" stroke-width="0.9"/></svg>
<div class="abs nw" id="acct">Konfiguration - Jahresvergleich</div>
<div class="abs" id="scroll"></div><div class="abs" id="thumb"></div>
<svg class="abs" style="left:1908px;top:7px" width="7" height="4" viewBox="0 0 7 4"><path d="M0 4L3.5 0L7 4z" fill="#a3a3a3"/></svg>
<svg class="abs" style="left:1908px;top:1069px" width="7" height="4" viewBox="0 0 7 4"><path d="M0 0L3.5 4L7 0z" fill="#505050"/></svg>
</body></html>
